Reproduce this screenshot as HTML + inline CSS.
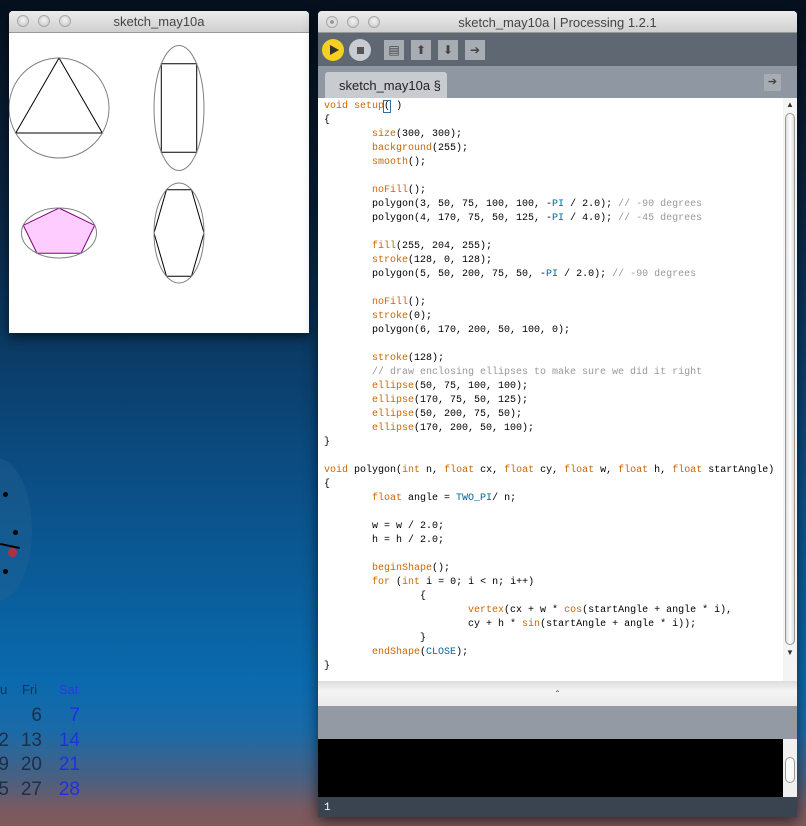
<!DOCTYPE html>
<html><head><meta charset="utf-8"><style>
body{margin:0;width:806px;height:826px;overflow:hidden;position:relative;font-family:"Liberation Sans",sans-serif;
background:linear-gradient(180deg,#06101e 0px,#0a2440 200px,#0b4a7e 450px,#0a6aad 680px,#1a6aa8 730px,#4a6080 780px,#7a5a60 810px,#7e5a5a 826px);}
.abs{position:absolute}
.tl{position:absolute;width:12px;height:12px;border-radius:50%;background:radial-gradient(circle at 50% 40%,#f4f4f4,#c4c4c4);border:1px solid #a8a8a8;box-sizing:border-box}
.code{position:absolute;left:324px;top:100px;font-family:"Liberation Mono",monospace;font-size:10px;line-height:14px;white-space:pre;color:#000}
.k{color:#cc6600}.c{color:#006699}.m{color:#999}
</style></head><body>
<!-- clock -->
<div class="abs" style="left:-40px;top:458px;width:72px;height:144px;border-radius:50%;background:rgba(40,100,150,.35)"></div>
<div class="abs" style="left:3px;top:492px;width:5px;height:5px;border-radius:50%;background:#000"></div>
<div class="abs" style="left:13px;top:530px;width:5px;height:5px;border-radius:50%;background:#000"></div>
<div class="abs" style="left:3px;top:569px;width:5px;height:5px;border-radius:50%;background:#000"></div>
<div class="abs" style="left:8px;top:548px;width:9px;height:9px;border-radius:50%;background:#b03040"></div>
<div class="abs" style="left:0;top:545px;width:20px;height:2px;background:#000;transform:rotate(12deg)"></div>
<!-- calendar -->
<div class="abs" style="left:0;top:682px;font-size:13px;color:#1a3050">u</div>
<div class="abs" style="left:22px;top:682px;font-size:13px;color:#1a3050">Fri</div>
<div class="abs" style="left:59px;top:682px;font-size:13px;color:#2a3ae0">Sat</div>
<div class="abs" style="left:-11px;top:704px;font-size:19px;line-height:24.5px;color:#1e2e48;text-align:right;width:20px">&nbsp;<br>2<br>9<br>5</div>
<div class="abs" style="left:16px;top:704px;font-size:19px;line-height:24.5px;color:#1e2e48;text-align:right;width:26px">6<br>13<br>20<br>27</div>
<div class="abs" style="left:54px;top:704px;font-size:19px;line-height:24.5px;color:#2030e0;text-align:right;width:26px">7<br>14<br>21<br>28</div>

<!-- sketch window -->
<div class="abs" style="left:9px;top:11px;width:300px;height:322px;background:#fff;box-shadow:0 4px 12px rgba(0,0,0,.6);border-radius:4px 4px 0 0">
 <div style="height:21px;background:linear-gradient(#ececec,#cfcfcf);border-bottom:1px solid #999;border-radius:4px 4px 0 0;text-align:center;font-size:13px;line-height:22px;color:#444">sketch_may10a</div>
 <div class="tl" style="left:8px;top:4px"></div><div class="tl" style="left:29px;top:4px"></div><div class="tl" style="left:50px;top:4px"></div>
 <svg class="abs" style="left:0;top:22px" width="300" height="300" viewBox="0 0 300 300">
  <g fill="none" stroke-width="1">
   <polygon points="50,25 93.3,100 6.7,100" stroke="#000"/>
   <polygon points="187.7,30.8 187.7,119.2 152.3,119.2 152.3,30.8" stroke="#000"/>
   <polygon points="50,175 85.7,192.3 72,220.2 28,220.2 14.3,192.3" stroke="#800080" fill="#ffccff"/>
   <polygon points="195,200 182.5,243.3 157.5,243.3 145,200 157.5,156.7 182.5,156.7" stroke="#000"/>
   <ellipse cx="50" cy="75" rx="50" ry="50" stroke="#808080"/>
   <ellipse cx="170" cy="75" rx="25" ry="62.5" stroke="#808080"/>
   <ellipse cx="50" cy="200" rx="37.5" ry="25" stroke="#808080"/>
   <ellipse cx="170" cy="200" rx="25" ry="50" stroke="#808080"/>
  </g>
 </svg>
</div>

<!-- processing window -->
<div class="abs" style="left:318px;top:11px;width:479px;height:806px;background:#e8e8e8;box-shadow:0 4px 14px rgba(0,0,0,.6);border-radius:4px 4px 0 0;overflow:hidden">
 <div style="height:22px;background:linear-gradient(#ececec,#d0d0d0);border-bottom:1px solid #999;text-align:center;font-size:13px;line-height:23px;color:#444;box-sizing:border-box">sketch_may10a | Processing 1.2.1</div>
 <div class="tl" style="left:8px;top:5px;background:radial-gradient(circle,#999 25%,#ddd 30%)"></div><div class="tl" style="left:29px;top:5px"></div><div class="tl" style="left:50px;top:5px"></div>
 <div class="abs" style="left:0;top:22px;width:479px;height:33px;background:#5f6773"></div>
 <div class="abs" style="left:4px;top:28px;width:22px;height:22px;border-radius:50%;background:#f5d020"></div>
 <div class="abs" style="left:12px;top:34px;width:0;height:0;border-left:9px solid #333;border-top:5px solid transparent;border-bottom:5px solid transparent"></div>
 <div class="abs" style="left:31px;top:28px;width:22px;height:22px;border-radius:50%;background:#c8ccd1"></div>
 <div class="abs" style="left:39px;top:36px;width:7px;height:7px;background:#555"></div>
 <div class="abs" style="left:66px;top:29px;width:20px;height:20px;background:#a8adb4;color:#444;font-size:12px;text-align:center;line-height:20px">▤</div>
 <div class="abs" style="left:93px;top:29px;width:20px;height:20px;background:#a8adb4;color:#444;font-size:12px;text-align:center;line-height:20px">⬆</div>
 <div class="abs" style="left:120px;top:29px;width:20px;height:20px;background:#a8adb4;color:#444;font-size:12px;text-align:center;line-height:20px">⬇</div>
 <div class="abs" style="left:147px;top:29px;width:20px;height:20px;background:#a8adb4;color:#444;font-size:12px;text-align:center;line-height:20px">➔</div>
 <div class="abs" style="left:0;top:55px;width:479px;height:32px;background:#8f98a2"></div>
 <div class="abs" style="left:7px;top:61px;width:122px;height:26px;background:#c8ccd1;border-radius:3px 3px 0 0;font-size:13px;line-height:28px;color:#222;padding-left:14px;box-sizing:border-box">sketch_may10a §</div>
 <div class="abs" style="left:446px;top:63px;width:17px;height:17px;background:#a8adb4;color:#444;font-size:11px;text-align:center;line-height:17px">➔</div>
 <div class="abs" style="left:0;top:87px;width:465px;height:583px;background:#fff"></div>
 <div class="abs" style="left:465px;top:87px;width:14px;height:583px;background:#f4f4f4"></div>
 <div class="abs" style="left:467px;top:102px;width:10px;height:532px;border:1px solid #999;border-radius:5px;background:linear-gradient(90deg,#ddd,#fff,#ddd);box-sizing:border-box"></div>
 <div class="abs" style="left:468px;top:89px;font-size:8px;color:#333">▲</div>
 <div class="abs" style="left:468px;top:637px;font-size:8px;color:#333">▼</div>
 <div class="abs" style="left:0;top:670px;width:479px;height:25px;background:linear-gradient(#ddd,#f4f4f4 40%,#eaeaea);text-align:center;font-size:10px;color:#333;line-height:30px">ˆ</div>
 <div class="abs" style="left:0;top:695px;width:479px;height:33px;background:#939aa3"></div>
 <div class="abs" style="left:0;top:728px;width:465px;height:58px;background:#000"></div>
 <div class="abs" style="left:465px;top:728px;width:14px;height:58px;background:#f0f0f0"></div>
 <div class="abs" style="left:467px;top:746px;width:10px;height:26px;border:1px solid #999;border-radius:5px;background:#fafafa;box-sizing:border-box"></div>
 <div class="abs" style="left:0;top:786px;width:479px;height:20px;background:#3a4350;color:#fff;font-family:'Liberation Mono',monospace;font-size:11px;line-height:22px;padding-left:6px;box-sizing:border-box">1</div>
</div>

<div class="code"><span class="k">void</span> <span class="k">setup</span><span style="outline:1px solid #3070a0">(</span> )
{
	<span class="k">size</span>(300, 300);
	<span class="k">background</span>(255);
	<span class="k">smooth</span>();

	<span class="k">noFill</span>();
	polygon(3, 50, 75, 100, 100, -<span class="c">PI</span> / 2.0); <span class="m">// -90 degrees</span>
	polygon(4, 170, 75, 50, 125, -<span class="c">PI</span> / 4.0); <span class="m">// -45 degrees</span>

	<span class="k">fill</span>(255, 204, 255);
	<span class="k">stroke</span>(128, 0, 128);
	polygon(5, 50, 200, 75, 50, -<span class="c">PI</span> / 2.0); <span class="m">// -90 degrees</span>

	<span class="k">noFill</span>();
	<span class="k">stroke</span>(0);
	polygon(6, 170, 200, 50, 100, 0);

	<span class="k">stroke</span>(128);
	<span class="m">// draw enclosing ellipses to make sure we did it right</span>
	<span class="k">ellipse</span>(50, 75, 100, 100);
	<span class="k">ellipse</span>(170, 75, 50, 125);
	<span class="k">ellipse</span>(50, 200, 75, 50);
	<span class="k">ellipse</span>(170, 200, 50, 100);
}

<span class="k">void</span> polygon(<span class="k">int</span> n, <span class="k">float</span> cx, <span class="k">float</span> cy, <span class="k">float</span> w, <span class="k">float</span> h, <span class="k">float</span> startAngle)
{
	<span class="k">float</span> angle = <span class="c">TWO_PI</span>/ n;

	w = w / 2.0;
	h = h / 2.0;

	<span class="k">beginShape</span>();
	<span class="k">for</span> (<span class="k">int</span> i = 0; i &lt; n; i++)
		{
			<span class="k">vertex</span>(cx + w * <span class="k">cos</span>(startAngle + angle * i),
			cy + h * <span class="k">sin</span>(startAngle + angle * i));
		}
	<span class="k">endShape</span>(<span class="c">CLOSE</span>);
}</div>
</body></html>
